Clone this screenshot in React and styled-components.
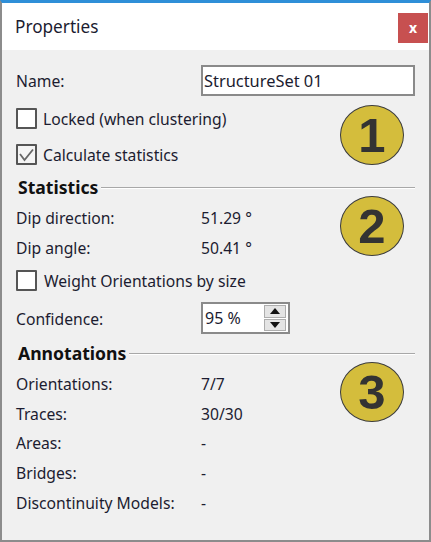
import React from "react";
import styled, { createGlobalStyle } from "styled-components";

const GlobalStyle = createGlobalStyle`
  html, body {
    margin: 0;
    padding: 0;
    background: #f0f0f0;
  }
`;

const Window = styled.div`
  position: relative;
  box-sizing: border-box;
  width: 431px;
  height: 542px;
  background: #f0f0f0;
  border: 2px solid #8c8c8c;
  border-top: 3px solid #2f8fd8;
  font-family: "Noto Sans", sans-serif;
  font-size: 15.7px;
  color: #1c1c30;
  overflow: hidden;
`;

const TitleBar = styled.div`
  display: flex;
  align-items: center;
  justify-content: space-between;
  height: 47px;
  padding: 0 1px 0 13px;
  background: #fff;
  font-size: 17.2px;
`;

const CloseButton = styled.div`
  display: flex;
  align-items: center;
  justify-content: center;
  width: 30px;
  height: 30px;
  margin-top: 2px;
  background: #c75050;
  color: #fff;
  font-weight: 700;
  font-size: 14px;
`;

const Body = styled.div`
  display: flex;
  flex-direction: column;
  padding: 14px 14px 0;
`;

const Row = styled.div`
  display: flex;
  align-items: center;
  flex: none;
  height: ${(p) => p.$height || 29.8}px;
`;

const NameRow = styled(Row)`
  margin-bottom: 4px;
`;

const Text = styled.span`
  padding-top: 2px;
`;

const Label = styled(Text)`
  width: 185px;
  flex: none;
`;

const NameInput = styled.div`
  box-sizing: border-box;
  width: 214px;
  height: 31px;
  padding-left: 1px;
  line-height: 27px;
  background: #fff;
  border: 2px solid #8a8a8a;
  font-size: 16.4px;
`;

const Box = styled.span`
  display: flex;
  align-items: center;
  justify-content: center;
  box-sizing: border-box;
  width: 21px;
  height: 21px;
  margin-right: ${(p) => p.$gap || 6}px;
  flex: none;
  background: ${(p) => (p.$checked ? "#f4f4f4" : "#fff")};
  border: 2px solid #555;
  border-radius: 1px;
`;

const SectionHead = styled.div`
  display: flex;
  align-items: center;
  flex: none;
  height: 30px;
  font-weight: 700;
  font-size: 17.6px;
  color: #111;
  padding-left: 2px;

  &::after {
    content: "";
    flex: 1;
    height: 1px;
    margin: 2px 0 0 3px;
    background: #a8a8a8;
    border-bottom: 1px solid #fff;
  }
`;

const Spin = styled.div`
  display: flex;
  box-sizing: border-box;
  width: 89px;
  height: 32px;
  background: #fff;
  border: 2px solid #8a8a8a;
  align-items: center;
  padding: 0 2px 0 2px;
  font-size: 16px;
  justify-content: space-between;
`;

const Stepper = styled.div`
  display: flex;
  flex-direction: column;
  gap: 1px;
  width: 22px;
  height: 26px;
`;

const StepButton = styled.div`
  flex: 1;
  display: flex;
  align-items: center;
  justify-content: center;
  background: #e4e4e4;
  border: 1px solid #adadad;
`;

const Badge = styled.div`
  position: absolute;
  left: 338px;
  top: ${(p) => p.$top}px;
  display: flex;
  align-items: center;
  justify-content: center;
  box-sizing: border-box;
  width: 64px;
  height: 60px;
  border-radius: 50%;
  background: #d4bd3c;
  border: 1px solid #3c3c3c;
  color: #333;
  font-family: "Liberation Sans", sans-serif;
  font-weight: 700;
  font-size: 49px;
`;

const Tick = () => (
  <svg width="17" height="17" viewBox="0 0 17 17">
    <path d="M2 8 L6.5 14 L15 3.5" fill="none" stroke="#666" strokeWidth="1.8" />
  </svg>
);

const Arrow = ({ up }) => (
  <svg width="10" height="6" viewBox="0 0 10 6">
    <path d={up ? "M5 0 L10 6 L0 6 Z" : "M0 0 L10 0 L5 6 Z"} fill="#111" />
  </svg>
);

const annotations = [
  ["Orientations:", "7/7"],
  ["Traces:", "30/30"],
  ["Areas:", "-"],
  ["Bridges:", "-"],
  ["Discontinuity Models:", "-"]
];

const App = () => (
  <>
    <GlobalStyle />
    <Window>
      <TitleBar>
        Properties
        <CloseButton>x</CloseButton>
      </TitleBar>
      <Body>
        <NameRow $height={32}>
          <Label>Name:</Label>
          <NameInput>StructureSet 01</NameInput>
        </NameRow>
        <Row $height={36}>
          <Box />
          <Text>Locked (when clustering)</Text>
        </Row>
        <Row $height={36}>
          <Box $checked>
            <Tick />
          </Box>
          <Text>Calculate statistics</Text>
        </Row>
        <SectionHead>Statistics</SectionHead>
        <Row $height={30}>
          <Label>Dip direction:</Label>
          <Text>51.29 °</Text>
        </Row>
        <Row $height={30}>
          <Label>Dip angle:</Label>
          <Text>50.41 °</Text>
        </Row>
        <Row $height={36}>
          <Box $gap={7} />
          <Text>Weight Orientations by size</Text>
        </Row>
        <Row $height={40}>
          <Label>Confidence:</Label>
          <Spin>
            95 %
            <Stepper>
              <StepButton>
                <Arrow up />
              </StepButton>
              <StepButton>
                <Arrow />
              </StepButton>
            </Stepper>
          </Spin>
        </Row>
        <SectionHead>Annotations</SectionHead>
        {annotations.map(([label, value]) => (
          <Row key={label}>
            <Label>{label}</Label>
            <Text>{value}</Text>
          </Row>
        ))}
      </Body>
      <Badge $top={102}>1</Badge>
      <Badge $top={193}>2</Badge>
      <Badge $top={359}>3</Badge>
    </Window>
  </>
);

export default App;
